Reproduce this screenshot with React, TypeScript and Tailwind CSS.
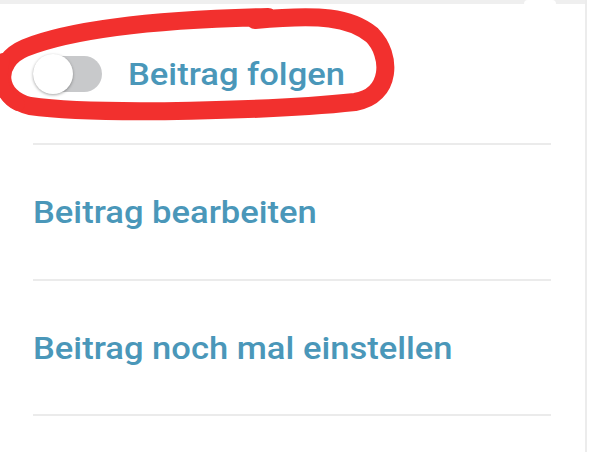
import React from "react";

function Toggle() {
  return (
    <div className="relative flex h-[40px] w-[69px] shrink-0 items-center">
      <div className="h-[36px] w-[69px] rounded-full bg-[#c8c9cb]" />
      <div className="absolute left-0 top-0 h-[40px] w-[40px] rounded-full bg-white shadow-[0_1px_3px_rgba(0,0,0,0.35)]" />
    </div>
  );
}

function Divider() {
  return <div className="h-[2px] w-[518px] bg-[#ebebeb]" />;
}

function Label({ children }: { children: React.ReactNode }) {
  return (
    <span className="inline-block origin-left scale-x-[1.08] whitespace-nowrap text-[32px] font-medium leading-none text-[#4a97b9]">
      {children}
    </span>
  );
}

export default function App() {
  return (
    <div
      className="relative h-[452px] w-[590px] overflow-hidden bg-white"
      style={{ fontFamily: "Roboto, 'Noto Sans', sans-serif" }}
    >
      <div className="flex h-full w-[587px] flex-col border-r-[2px] border-[#ececec]">
        {/* top edge of the popup with its pointer */}
        <div className="relative h-[4px] w-full bg-[#efefef]">
          <div className="absolute left-[524px] top-0 h-[4px] w-[32px] rounded-t-[6px] bg-white" />
        </div>
        <div className="flex flex-col pl-[33px]">
          <div className="flex h-[139px] items-center gap-[26px]">
            <Toggle />
            <Label>Beitrag folgen</Label>
          </div>
          <Divider />
          <div className="flex h-[134px] items-center">
            <Label>Beitrag bearbeiten</Label>
          </div>
          <Divider />
          <div className="flex h-[133px] items-center">
            <Label>Beitrag noch mal einstellen</Label>
          </div>
          <Divider />
        </div>
      </div>

      {/* hand-drawn marker loop around the first option */}
      <svg
        className="pointer-events-none absolute left-0 top-0"
        width="400"
        height="130"
        viewBox="0 0 400 130"
      >
        <path
          d="M 268 17 C 180 19, 80 26, 25 48 C -8 62, -4 98, 30 106 C 100 116, 280 110, 355 102 C 392 96, 392 55, 372 35 C 350 17, 320 14, 255 20"
          fill="none"
          stroke="#f2302e"
          strokeWidth="18"
          strokeLinecap="round"
          strokeLinejoin="round"
        />
        <path
          d="M 3 60 C -2 78, 2 96, 18 104"
          fill="none"
          stroke="#f2302e"
          strokeWidth="14"
          strokeLinecap="round"
        />
      </svg>
    </div>
  );
}
